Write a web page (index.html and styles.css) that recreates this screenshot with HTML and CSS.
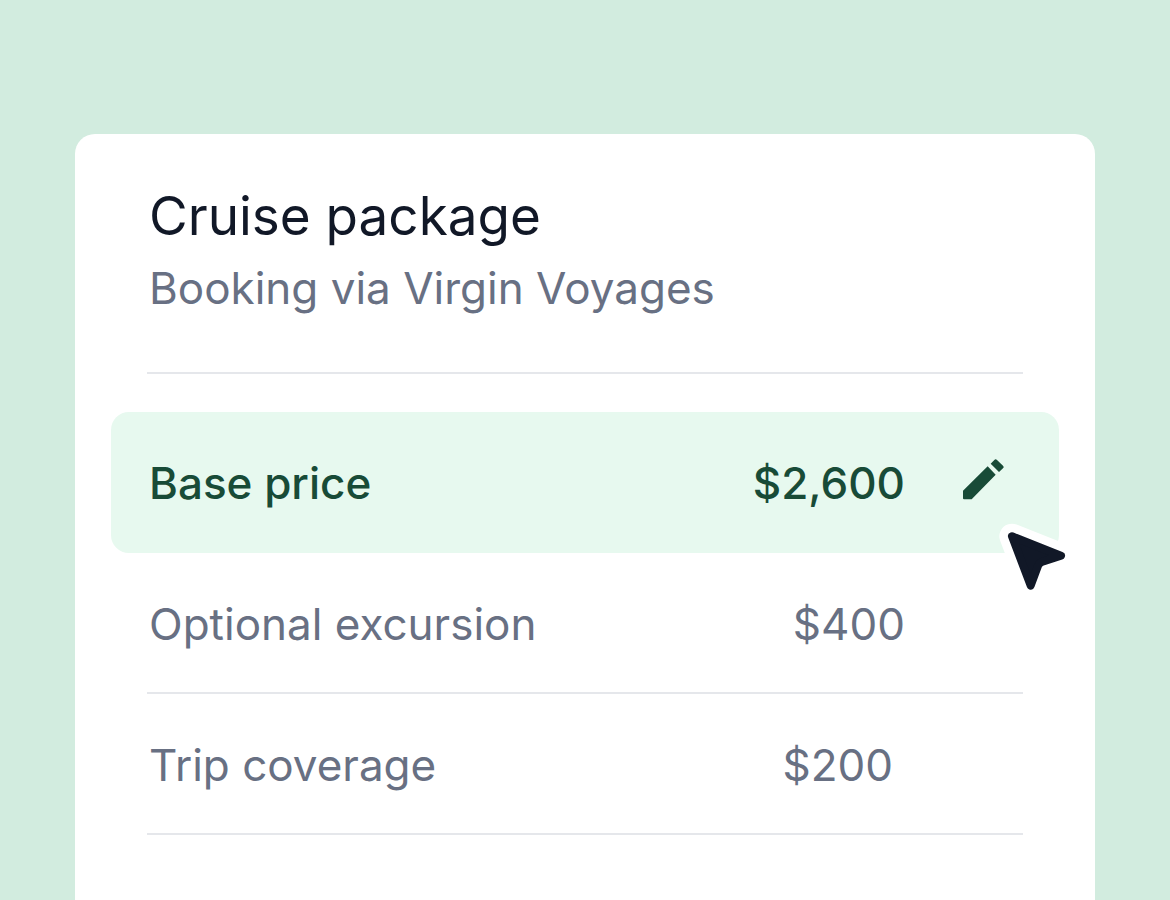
FILE: index.html
```html
<!DOCTYPE html>
<html lang="en">
<head>
<meta charset="utf-8">
<meta name="viewport" content="width=device-width, initial-scale=1">
<title>Cruise package</title>
<link rel="stylesheet" href="styles.css">
</head>
<body>
<main class="card">
  <header class="card-header">
    <h1 class="title">Cruise package</h1>
    <p class="subtitle">Booking via Virgin Voyages</p>
  </header>
  <ul class="items">
    <li class="item item-active">
      <span class="name">Base price</span>
      <span class="price">$2,600</span>
      <button class="edit" type="button" aria-label="Edit base price">
        <svg class="pencil" viewBox="0 0 123 123" aria-hidden="true"><path d="M0 95L74 22L98 47L26 121H3Q0 121 0 118ZM83 14L94 3Q98 -1 102 3L120 20Q124 24 120 28L108 39Z"/></svg>
      </button>
      <svg class="cursor" viewBox="201 363 228 228" aria-hidden="true"><path class="cursor-halo" d="M246 409L393 467L302 557Z"/><path class="cursor-body" d="M246 409L393 467L340 484Q328 487 324 498L302 557Z"/></svg>
    </li>
    <li class="item">
      <span class="name">Optional excursion</span>
      <span class="price">$400</span>
    </li>
    <li class="item">
      <span class="name">Trip coverage</span>
      <span class="price price-inset">$200</span>
    </li>
  </ul>
</main>
</body>
</html>
```

FILE: styles.css
```css
* {
  box-sizing: border-box;
}

body {
  display: flex;
  min-height: 100vh;
  margin: 0;
  padding: 134px 75px 0;
  background: #d2ecdf;
  color: #687083;
  font-family: Inter, "Liberation Sans", sans-serif;
}

.card {
  flex: 1;
  padding: 48px 36px 0;
  border-radius: 20px 20px 0 0;
  background: #fff;
}

.card-header {
  margin: 0 36px 38px;
  padding: 0 2px 54px;
  border-bottom: 2px solid #e5e7eb;
}

.title {
  margin: 0;
  color: #111827;
  font-size: 53px;
  font-weight: 400;
  line-height: 68px;
}

.subtitle {
  margin: 0;
  padding-top: 8px;
  font-size: 44px;
  line-height: 60px;
}

.items {
  margin: 0;
  padding: 0;
  list-style: none;
}

.item {
  display: flex;
  align-items: center;
  height: 141px;
  margin: 0 36px;
  padding: 2px 118px 0 2px;
  border-bottom: 2px solid #e5e7eb;
  font-size: 44px;
  line-height: 60px;
}

.item-active {
  position: relative;
  margin: 0;
  padding: 0 47px 0 38px;
  border: 0;
  border-radius: 18px;
  background: #e7f9ef;
  color: #184b37;
  font-weight: 500;
}

.name {
  flex: 1;
}

.price-inset {
  padding-right: 12px;
}

.edit {
  display: flex;
  margin-left: 50px;
  padding: 4px 8px 10px;
  border: 0;
  background: none;
  color: inherit;
}

.pencil {
  width: 41px;
  height: 41px;
  fill: currentColor;
}

.cursor {
  position: absolute;
  right: -14px;
  bottom: -44px;
  width: 76px;
  height: 76px;
}

.cursor-halo,
.cursor-body {
  stroke-linejoin: round;
}

.cursor-halo {
  fill: #fff;
  stroke: #fff;
  stroke-width: 76px;
}

.cursor-body {
  fill: #111827;
  stroke: #111827;
  stroke-width: 24px;
}
```
